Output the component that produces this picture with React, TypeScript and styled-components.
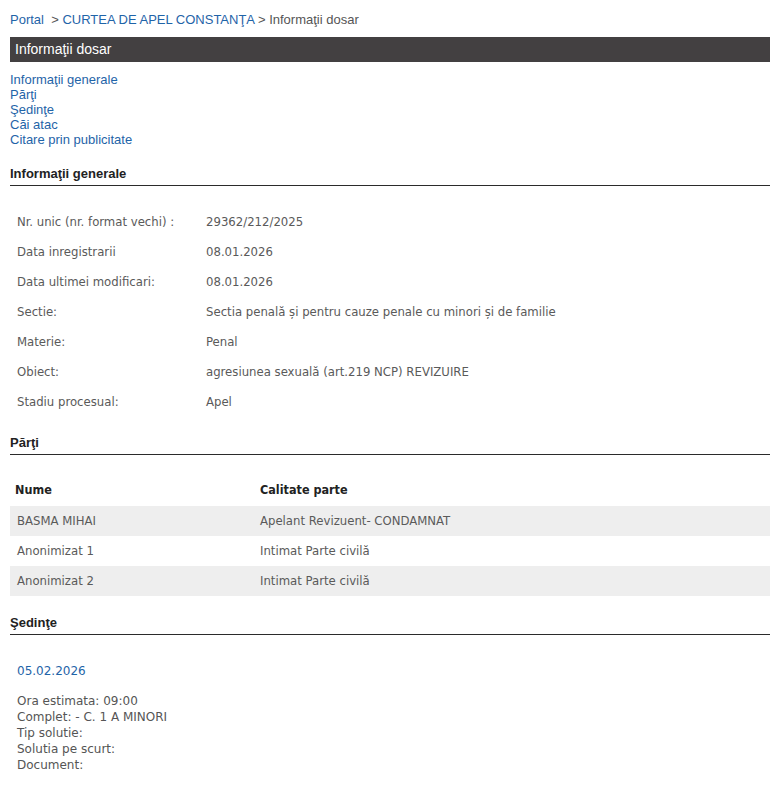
import { Fragment } from "react";
import styled, { createGlobalStyle } from "styled-components";

const GlobalStyle = createGlobalStyle`
  html, body {
    margin: 0;
    padding: 0;
    background: #fff;
  }
  body {
    font-family: "Liberation Sans", Arial, sans-serif;
  }
`;

const Page = styled.div`
  width: 760px;
  padding: 12px 9px 20px 10px;
`;

const Crumbs = styled.div`
  font-size: 13px;
  line-height: 15px;
  color: #555;
  white-space: pre;
`;

const CrumbLink = styled.a`
  color: #1f64a8;
  text-decoration: none;
`;

const Bar = styled.div`
  margin-top: 10px;
  height: 25px;
  line-height: 25px;
  background: #434041;
  color: #fff;
  font-size: 14px;
  padding-left: 5px;
`;

const Nav = styled.div`
  margin-top: 10px;
  display: flex;
  flex-direction: column;
`;

const NavLink = styled.a`
  color: #1f64a8;
  font-size: 13px;
  line-height: 15px;
  text-decoration: none;
`;

const SectionTitle = styled.div<{ $gap: number }>`
  margin-top: ${(p) => p.$gap}px;
  font-size: 13px;
  font-weight: bold;
  line-height: 16px;
  color: #222;
  padding-bottom: 3px;
  border-bottom: 1.5px solid #2b2b2b;
`;

const InfoTable = styled.div`
  margin-top: 21px;
  display: grid;
  grid-template-columns: 196px 1fr;
  font-family: "DejaVu Sans Condensed", "DejaVu Sans", sans-serif;
  font-size: 13px;
  color: #5a5a5a;
`;

const InfoCell = styled.div<{ $first?: boolean }>`
  height: 30px;
  line-height: 30px;
  padding-left: ${(p) => (p.$first ? 7 : 0)}px;
`;

const PartsTable = styled.div`
  margin-top: 21px;
  display: flex;
  flex-direction: column;
  font-family: "DejaVu Sans Condensed", "DejaVu Sans", sans-serif;
  font-size: 13px;
`;

const PartsRow = styled.div<{ $shaded?: boolean; $head?: boolean }>`
  display: grid;
  grid-template-columns: ${(p) => (p.$head ? "245px 1fr" : "243px 1fr")};
  height: 30px;
  line-height: ${(p) => (p.$head ? 28 : 30)}px;
  padding-left: ${(p) => (p.$head ? 5 : 7)}px;
  background: ${(p) => (p.$shaded ? "#eeeeee" : "transparent")};
  color: ${(p) => (p.$head ? "#222" : "#5a5a5a")};
  font-weight: ${(p) => (p.$head ? "bold" : "normal")};
  font-size: ${(p) => (p.$head ? 12.5 : 13)}px;
`;

const Hearing = styled.div`
  padding-left: 7px;
  font-family: "DejaVu Sans", Verdana, sans-serif;
  font-size: 12px;
  color: #555;
`;

const HearingDate = styled.a`
  display: block;
  margin-top: 29px;
  line-height: 14px;
  color: #1f64a8;
  text-decoration: none;
`;

const HearingLines = styled.div`
  margin-top: 15px;
  line-height: 16px;
`;

const info: [string, string][] = [
  ["Nr. unic (nr. format vechi) :", "29362/212/2025"],
  ["Data inregistrarii", "08.01.2026"],
  ["Data ultimei modificari:", "08.01.2026"],
  ["Sectie:", "Sectia penală și pentru cauze penale cu minori și de familie"],
  ["Materie:", "Penal"],
  ["Obiect:", "agresiunea sexuală (art.219 NCP) REVIZUIRE"],
  ["Stadiu procesual:", "Apel"],
];

const parts: [string, string][] = [
  ["BASMA MIHAI", "Apelant Revizuent- CONDAMNAT"],
  ["Anonimizat 1", "Intimat Parte civilă"],
  ["Anonimizat 2", "Intimat Parte civilă"],
];

export default function App() {
  return (
    <>
      <GlobalStyle />
      <Page>
        <Crumbs>
          <CrumbLink href="#">Portal</CrumbLink>
          {"  > "}
          <CrumbLink href="#">CURTEA DE APEL CONSTANŢA</CrumbLink>
          {" > Informaţii dosar"}
        </Crumbs>
        <Bar>Informaţii dosar</Bar>
        <Nav>
          <NavLink href="#">Informaţii generale</NavLink>
          <NavLink href="#">Părţi</NavLink>
          <NavLink href="#">Şedinţe</NavLink>
          <NavLink href="#">Căi atac</NavLink>
          <NavLink href="#">Citare prin publicitate</NavLink>
        </Nav>

        <SectionTitle $gap={19}>Informaţii generale</SectionTitle>
        <InfoTable>
          {info.map(([k, v]) => (
            <Fragment key={k}>
              <InfoCell $first>{k}</InfoCell>
              <InfoCell>{v}</InfoCell>
            </Fragment>
          ))}
        </InfoTable>

        <SectionTitle $gap={18}>Părţi</SectionTitle>
        <PartsTable>
          <PartsRow $head>
            <div>Nume</div>
            <div>Calitate parte</div>
          </PartsRow>
          {parts.map(([n, c], i) => (
            <PartsRow key={n} $shaded={i % 2 === 0}>
              <div>{n}</div>
              <div>{c}</div>
            </PartsRow>
          ))}
        </PartsTable>

        <SectionTitle $gap={19}>Şedinţe</SectionTitle>
        <Hearing>
          <HearingDate href="#">05.02.2026</HearingDate>
          <HearingLines>
            <div>Ora estimata: 09:00</div>
            <div>Complet: - C. 1 A MINORI</div>
            <div>Tip solutie:</div>
            <div>Solutia pe scurt:</div>
            <div>Document:</div>
          </HearingLines>
        </Hearing>
      </Page>
    </>
  );
}
